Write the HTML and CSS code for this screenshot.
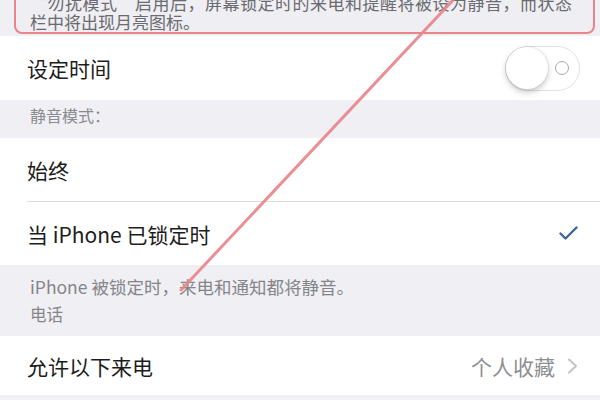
FILE: index.html
```html
<!DOCTYPE html>
<html lang="zh-CN">
<head>
<meta charset="utf-8">
<link rel="stylesheet" href="styles.css">
</head>
<body>
<div class="page">
  <section class="note">
    <div class="note-box">
      <p class="note-text">“勿扰模式”启用后，屏幕锁定时的来电和提醒将被设为静音，而状态栏中将出现月亮图标。</p>
    </div>
  </section>

  <div class="row row-switch">
    <span class="label">设定时间</span>
    <span class="toggle"><span class="knob"></span><span class="ring"></span></span>
  </div>

  <div class="group-header">静音模式：</div>

  <div class="row row-sep">
    <div class="row-inner"><span class="label">始终</span></div>
  </div>
  <div class="row">
    <div class="row-inner no-line">
      <span class="label">当 iPhone 已锁定时</span>
      <svg class="check" width="19" height="15" viewBox="0 0 19 15"><polyline points="1.5,7.5 6.5,12.5 17.5,1.5" fill="none" stroke="#3d6591" stroke-width="2.4" stroke-linecap="round" stroke-linejoin="round"/></svg>
    </div>
  </div>

  <div class="group-footer">
    <p class="footer-text">iPhone 被锁定时，来电和通知都将静音。</p>
    <p class="footer-head">电话</p>
  </div>

  <div class="row row-calls">
    <span class="label">允许以下来电</span>
    <span class="detail">个人收藏
      <svg class="chevron" width="11" height="16" viewBox="0 0 11 16"><polyline points="2,1.5 9,8 2,14.5" fill="none" stroke="#c4c4c9" stroke-width="2" stroke-linecap="round" stroke-linejoin="round"/></svg>
    </span>
  </div>

  <svg class="annot" width="600" height="400" viewBox="0 0 600 400">
    <line x1="455" y1="-2" x2="181" y2="290" stroke="#e8858a" stroke-width="3" stroke-linecap="round" opacity="0.9"/>
  </svg>
</div>
</body>
</html>
```

FILE: styles.css
```css
html, body {
  margin: 0;
  padding: 0;
}
body {
  width: 600px;
  height: 400px;
  overflow: hidden;
  background: #efeff4;
  font-family: "Noto Sans CJK SC", "Noto Sans", sans-serif;
}
.page {
  position: relative;
  width: 600px;
  height: 400px;
  overflow: hidden;
  background: #efeff4;
}
p { margin: 0; }

.note {
  display: flow-root;
  height: 36px;
  padding: 0 5px 0 14px;
  box-sizing: border-box;
}
.note-box {
  margin-top: -9px;
  border: 2px solid #e8858a;
  border-radius: 0 0 8px 8px;
  padding: 0 21px 1px 14px;
  background: #eeeef3;
}
.note-text {
  font-size: 17px;
  line-height: 19px;
  color: #6a6a6f;
  text-align: justify;
}

.row {
  display: flex;
  align-items: center;
  background: #ffffff;
  padding-left: 27px;
}
.label {
  font-size: 21px;
  color: #1c1c1c;
  white-space: nowrap;
}
.row-switch {
  height: 64px;
  justify-content: space-between;
  padding-right: 20px;
}
.toggle {
  width: 75px;
  height: 45px;
  box-sizing: border-box;
  border: 1.5px solid #e2e2e6;
  border-radius: 23px;
  background: #fff;
  display: flex;
  align-items: center;
}
.knob {
  width: 42px;
  height: 42px;
  border-radius: 50%;
  background: #fff;
  box-shadow: 0 3px 6px rgba(0,0,0,0.22), 0 0 0 1px rgba(0,0,0,0.05);
}
.ring {
  width: 14px;
  height: 14px;
  box-sizing: border-box;
  border: 1.6px solid #a9a9ad;
  border-radius: 50%;
  margin-left: 7px;
}

.group-header {
  height: 38px;
  box-sizing: border-box;
  padding: 5px 0 0 30px;
  font-size: 16px;
  line-height: 20px;
  color: #8a8a8f;
}

.row-inner {
  flex: 1;
  height: 63px;
  display: flex;
  align-items: center;
  justify-content: space-between;
  padding-right: 22px;
  box-sizing: border-box;
}
.row-sep .row-inner {
  height: 64px;
  border-bottom: 1px solid #dcdce0;
}
.check {
  display: block;
}

.group-footer {
  height: 71px;
  box-sizing: border-box;
  padding: 11px 0 0 30px;
  color: #858589;
}
.footer-text {
  font-size: 17.5px;
  line-height: 22px;
}
.footer-head {
  margin-top: 6px;
  font-size: 16.5px;
  line-height: 20px;
}

.row-calls {
  height: 59px;
  justify-content: space-between;
  padding-right: 22px;
}
.detail {
  display: flex;
  align-items: center;
  gap: 12px;
  font-size: 21px;
  color: #8e8e93;
}
.chevron { display: block; }

.annot {
  position: absolute;
  left: 0;
  top: 0;
  pointer-events: none;
}
```
